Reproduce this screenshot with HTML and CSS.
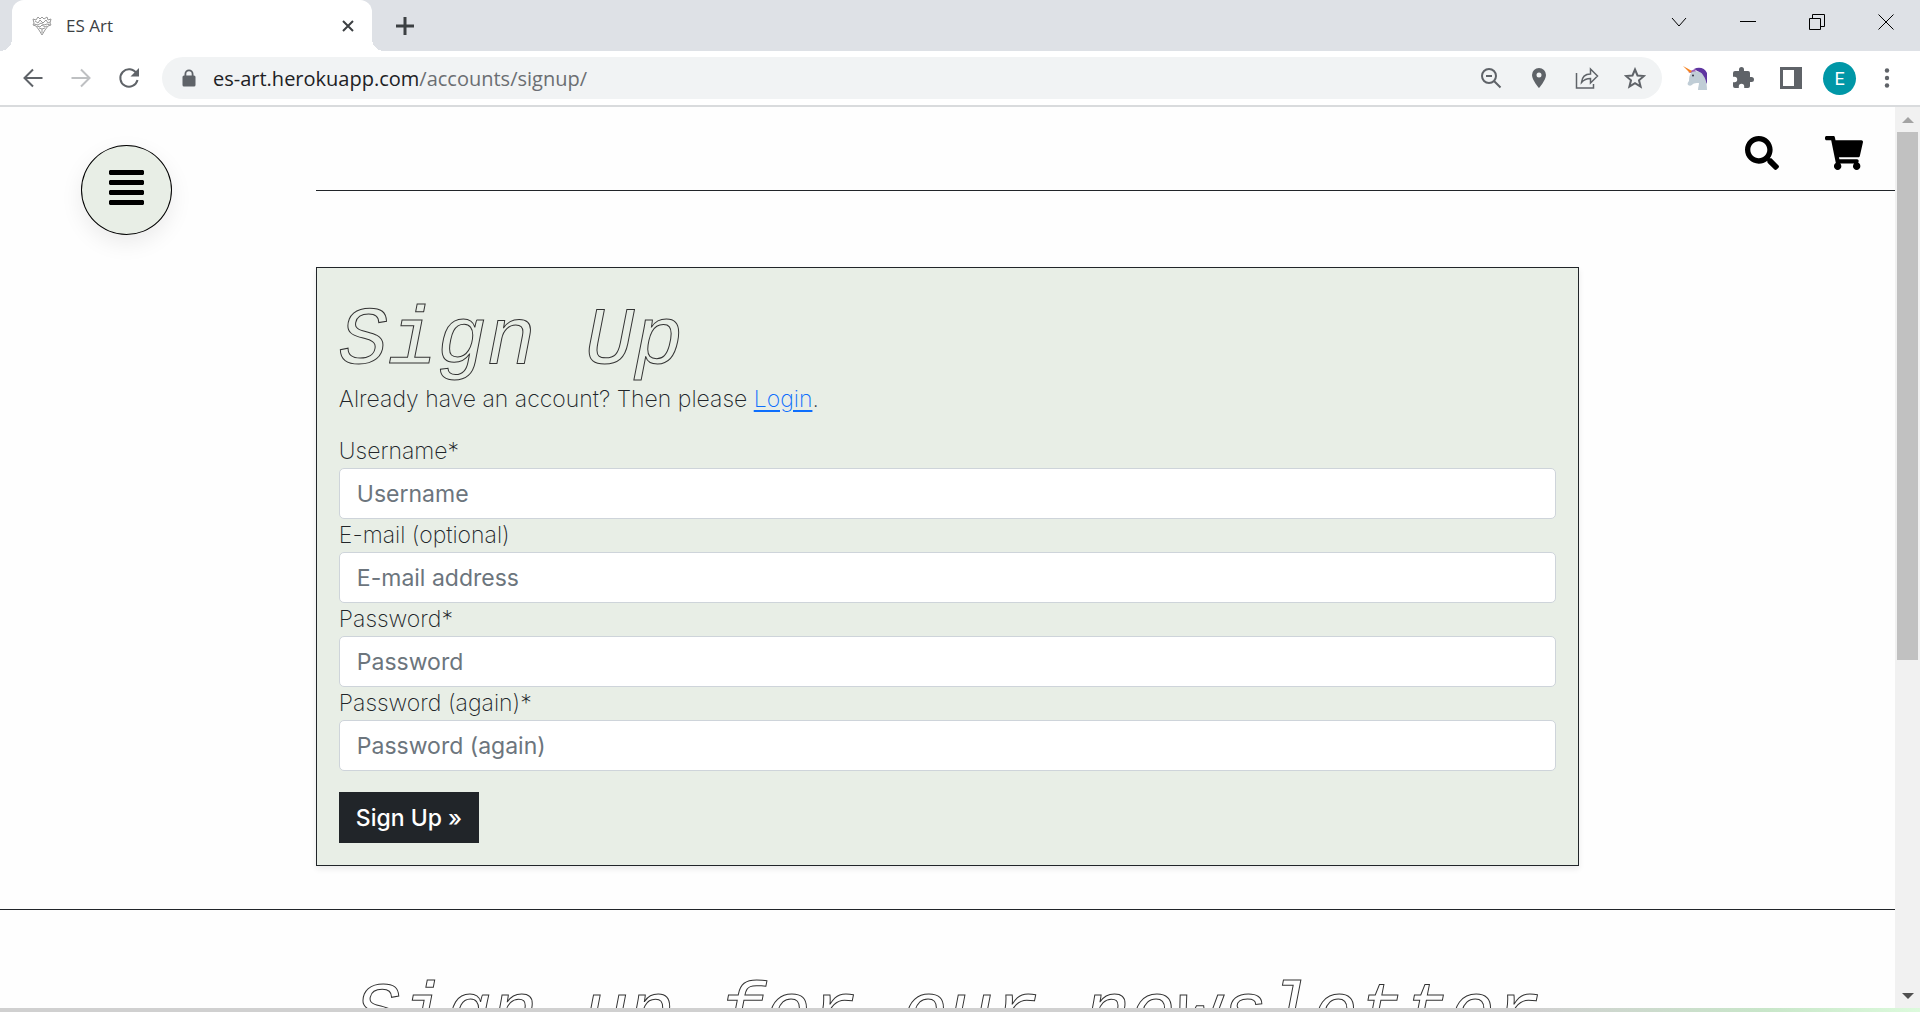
FILE: index.html
```html
<!DOCTYPE html>
<html lang="en">
<head>
<meta charset="utf-8">
<title>ES Art</title>
<link rel="stylesheet" href="styles.css">
</head>
<body>
<div class="browser">
  <div class="titlebar">
    <div class="tab">
      <svg class="favicon" width="20" height="20" viewBox="0 0 20 20" aria-hidden="true"><path d="M1 3l3 1 2-3 2 2 2-2 2 2 3-2 1 3 3-1-1 4 1 2-3 1-3 4-3 5-3-5-3-4-3-1 1-2zM3 5l3 2 2-3 3 3 3-3 2 3 2-1M2 8l4 1 3-2 3 2 3-1 3 1M5 10l3 1 2-2 3 2 2-1M7 12l3 1 3-1M10 13v4"/></svg>
      <span class="tab-title">ES Art</span>
      <button class="tab-close" aria-label="Close tab"><svg width="14" height="14" viewBox="0 0 14 14"><path d="M2 2l10 10M12 2L2 12"/></svg></button>
    </div>
    <button class="new-tab" aria-label="New tab"><svg width="18" height="18" viewBox="0 0 18 18"><path d="M9 0v18M0 9h18"/></svg></button>
    <div class="window-controls">
      <button aria-label="Search tabs"><svg width="16" height="16" viewBox="0 0 16 16"><path d="M1 4l7 8 7-8"/></svg></button>
      <button aria-label="Minimize"><svg width="16" height="16" viewBox="0 0 16 16"><path d="M0 7.500h16"/></svg></button>
      <button aria-label="Restore"><svg width="16" height="16" viewBox="0 0 16 16"><path d="M.5 4.500h11v11H.5zM3.500 4V.5h12v12H12"/></svg></button>
      <button aria-label="Close"><svg width="16" height="16" viewBox="0 0 16 16"><path d="M.5 .5l15 15M15.500 .5l-15 15"/></svg></button>
    </div>
  </div>

  <div class="toolbar">
    <div class="tool-group">
      <button aria-label="Back"><svg width="20" height="20" viewBox="0 0 20 20" class="line"><path d="M19.500 10H2M10 1.500L1.500 10l8.500 8.500"/></svg></button>
      <button aria-label="Forward" disabled><svg width="20" height="20" viewBox="0 0 20 20" class="line"><path d="M.5 10H18M10 1.500l8.500 8.500-8.500 8.500"/></svg></button>
      <button aria-label="Reload"><svg width="22" height="22" viewBox="0 0 22 22" class="line"><path d="M18.500 6.500A8.700 8.700 0 1 0 19.500 13"/><path class="solid" d="M21 1v8.500h-8.500z"/></svg></button>
    </div>
    <div class="omnibox">
      <svg width="14" height="18" viewBox="0 0 14 18" aria-hidden="true"><path d="M2.500 6.500V5a4.500 4.500 0 0 1 9 0v1.500h.5A1.500 1.500 0 0 1 13.500 8v8a1.500 1.500 0 0 1-1.500 1.500H2A1.500 1.500 0 0 1 .5 16V8A1.500 1.500 0 0 1 2 6.500zM4.300 6.500h5.400V5a2.700 2.700 0 0 0-5.400 0z"/></svg>
      <span class="url">es-art.herokuapp.com<span class="url-path">/accounts/signup/</span></span>
      <div class="tool-group">
        <button aria-label="Zoom"><svg width="22" height="22" viewBox="0 0 22 22" class="line"><circle cx="9" cy="9" r="7"/><path d="M14 14l6.500 6.500M6 9h6"/></svg></button>
        <button aria-label="Location"><svg width="16" height="22" viewBox="0 0 16 22"><path d="M8 1a7 7 0 0 1 7 7c0 5-7 13-7 13S1 13 1 8a7 7 0 0 1 7-7zm0 4.500a2.500 2.500 0 1 0 0 5 2.500 2.500 0 0 0 0-5z" fill-rule="evenodd"/></svg></button>
        <button aria-label="Share"><svg width="24" height="22" viewBox="0 0 24 22" class="line thin"><path d="M1.500 6v15h17v-4M6.500 15.500c.5-5.500 4-8.500 9-8.500V2l7 7-7 7v-4.500c-4 0-6.500 1-9 4z"/></svg></button>
        <button aria-label="Bookmark"><svg width="22" height="22" viewBox="0 0 22 22" class="line"><path d="M11 2.500l2.500 6 6.500.5-5 4.300 1.600 6.400L11 16.200l-5.600 3.500L7 13.300 2 9l6.500-.5z"/></svg></button>
      </div>
    </div>
    <div class="tool-group">
      <button aria-label="Unicorn extension"><svg width="24" height="24" viewBox="0 0 24 24"><path fill="#5e35a0" d="M11 3c5-2.500 11-1 13 4v11c-3-3-5-9-8-12z"/><path fill="#9b5db5" d="M5 6l7-3 1 3-5 1z"/><path fill="#c0cdd6" d="M9 6c4-1.500 9-1 11 3 2 3 4 6 4 15h-9c0-3 1-5 1-7-3 0-5 0-6 1-2 2-3 2-5 1-1-1 0-3 1-4 0-3 0-6 3-9z"/><path fill="#f5821f" d="M0 0l9 5-2 2z"/><circle cx="10" cy="9.500" r="1" fill="#334"/></svg></button>
      <button aria-label="Extensions"><svg width="24" height="24" viewBox="0 0 24 24"><path d="M20.500 11H19V7a2 2 0 0 0-2-2h-4V3.500a2.500 2.500 0 0 0-5 0V5H4a2 2 0 0 0-2 2v3.800h1.500a2.700 2.700 0 0 1 0 5.400H2V20a2 2 0 0 0 2 2h3.800v-1.500a2.700 2.700 0 0 1 5.400 0V22H17a2 2 0 0 0 2-2v-4h1.500a2.500 2.500 0 0 0 0-5z"/></svg></button>
      <button aria-label="Side panel"><svg width="22" height="22" viewBox="0 0 22 22"><path d="M0 0h22v22H0zM3 3v16h11V3z" fill-rule="evenodd"/></svg></button>
      <button class="avatar" aria-label="Profile">E</button>
      <button aria-label="Menu"><svg width="6" height="20" viewBox="0 0 6 20"><circle cx="3" cy="2.500" r="2.200"/><circle cx="3" cy="10" r="2.200"/><circle cx="3" cy="17.500" r="2.200"/></svg></button>
    </div>
  </div>

  <div class="viewport">
    <div class="page">
      <header class="site-header">
        <div class="menu-cell">
          <button class="menu-button" aria-label="Menu"><svg width="35" height="36" viewBox="0 0 35 36"><path d="M1 0h33l1 1v3l-1 1H1L0 4V1zM1 10h33l1 1v3l-1 1H1l-1-1v-3zM1 20h33l1 1v3l-1 1H1l-1-1v-3zM1 30h33l1 1v3l-1 1H1l-1-1v-3z"/></svg></button>
        </div>
        <nav class="site-nav">
          <a href="#search" aria-label="Search"><svg width="34" height="34" viewBox="0 0 512 512"><path d="M505 442.700L405.300 343c-4.500-4.500-10.600-7-17-7H372c27.600-35.300 44-79.700 44-128C416 93.100 322.900 0 208 0S0 93.100 0 208s93.100 208 208 208c48.300 0 92.700-16.400 128-44v16.300c0 6.400 2.500 12.500 7 17l99.700 99.700c9.400 9.400 24.600 9.400 33.900 0l28.300-28.300c9.400-9.400 9.400-24.600.1-34zM208 336c-70.700 0-128-57.200-128-128 0-70.700 57.200-128 128-128 70.700 0 128 57.200 128 128 0 70.700-57.200 128-128 128z"/></svg></a>
          <a href="#cart" aria-label="Cart"><svg width="38" height="34" viewBox="0 0 576 512"><path d="M528.120 301.319l47.273-208C578.806 78.301 567.391 64 551.990 64H159.208l-9.166-44.810C147.758 8.021 137.930 0 126.529 0H24C10.745 0 0 10.745 0 24v16c0 13.255 10.745 24 24 24h69.883l70.248 343.435C147.325 417.100 136 435.222 136 456c0 30.928 25.072 56 56 56s56-25.072 56-56c0-15.674-6.447-29.835-16.824-40h209.647C430.447 426.165 424 440.326 424 456c0 30.928 25.072 56 56 56s56-25.072 56-56c0-22.172-12.888-41.332-31.579-50.405l5.517-24.276c3.413-15.018-8.002-29.319-23.403-29.319H218.117l-6.545-32h293.145c11.206 0 20.920-7.754 23.403-18.681z"/></svg></a>
        </nav>
      </header>

      <main class="card">
        <h1>Sign Up</h1>
        <p>Already have an account? Then please <a href="#login">Login</a>.</p>
        <form>
          <label for="username">Username*</label>
          <input id="username" type="text" placeholder="Username">
          <label for="email">E-mail (optional)</label>
          <input id="email" type="email" placeholder="E-mail address">
          <label for="password1">Password*</label>
          <input id="password1" type="password" placeholder="Password">
          <label for="password2">Password (again)*</label>
          <input id="password2" type="password" placeholder="Password (again)">
          <button class="submit" type="submit">Sign Up »</button>
        </form>
      </main>

      <footer class="site-footer">
        <h2>Sign up for our newsletter</h2>
      </footer>
    </div>
    <div class="scrollbar" aria-hidden="true">
      <span class="arrow up"></span>
      <span class="track"><span class="thumb"></span></span>
      <span class="arrow down"></span>
    </div>
  </div>
  <div class="desktop-edge"></div>
</div>
</body>
</html>
```
FILE: styles.css
```css
* { box-sizing: border-box; }

body {
  margin: 0;
  font-family: Inter, sans-serif;
  color: #212529;
}

button {
  border: 0;
  padding: 0;
  background: none;
  font: inherit;
  color: inherit;
}

svg { display: block; flex: none; }

.browser {
  display: flex;
  flex-direction: column;
  height: 100vh;
  overflow: hidden;
}

/* Title bar */
.titlebar {
  display: flex;
  height: 51px;
  flex: none;
  padding-left: 12px;
  background: #dee1e6;
  font-family: "Open Sans", sans-serif;
}

.tab {
  position: relative;
  display: flex;
  align-items: center;
  width: 360px;
  padding: 0 17px 0 20px;
  border-radius: 12px 12px 0 0;
  background: #fff;
}

.tab::before,
.tab::after {
  content: "";
  position: absolute;
  bottom: 0;
  width: 12px;
  height: 12px;
}

.tab::before { right: 100%; background: radial-gradient(circle at 0 0, transparent 12px, #fff 12px); }
.tab::after { left: 100%; background: radial-gradient(circle at 100% 0, transparent 12px, #fff 12px); }

.favicon { fill: none; stroke: #999; }
.tab-title { flex: 1; padding-left: 14px; font-size: 17px; color: #3c4043; }
.tab-close svg { stroke: #3c4043; stroke-width: 2; }
.new-tab { padding-left: 24px; }
.new-tab svg { stroke: #3c4043; stroke-width: 3; }

.window-controls { display: flex; height: 44px; margin-left: auto; }
.window-controls button { display: grid; place-items: center; width: 69px; }
.window-controls svg { fill: none; stroke: #000; }

/* Toolbar */
.toolbar {
  display: flex;
  align-items: center;
  height: 56px;
  flex: none;
  padding: 0 9px;
  border-bottom: 2px solid #d9dbdd;
  background: #fff;
  font-family: "Open Sans", sans-serif;
}

.tool-group { display: flex; align-items: center; fill: #5f6368; }
.tool-group button { display: grid; place-items: center; width: 48px; height: 42px; }
.tool-group button:disabled { opacity: 0.4; }
.line { fill: none; stroke: #5f6368; stroke-width: 2; }
.line.thin { stroke-width: 1.5; }
.solid { fill: #5f6368; stroke: none; }

.omnibox {
  display: flex;
  flex: 1;
  align-items: center;
  height: 42px;
  margin: 0 9px;
  padding: 0 3px 0 20px;
  border-radius: 21px;
  background: #f1f3f4;
  fill: #5f6368;
}

.url { flex: 1; padding-left: 17px; font-size: 20px; color: #202124; }
.url-path { color: #6b6e72; }

.tool-group .avatar {
  width: 33px;
  height: 33px;
  margin: 0 7px 0 8px;
  border-radius: 50%;
  background: #0097a7;
  color: #fff;
  font-family: Roboto, sans-serif;
  font-size: 18px;
}

/* Page */
.viewport { display: flex; flex: 1; min-height: 0; background: #fefefe; }
.page { flex: 1; min-width: 0; overflow: hidden; }

.site-header {
  display: grid;
  grid-template-columns: 1fr 5fr;
  grid-template-rows: 84px;
  align-items: start;
}

.menu-cell { padding: 38px 0 0 81px; }

.menu-button {
  display: grid;
  place-items: center;
  width: 91px;
  height: 90px;
  padding-bottom: 4px;
  border: 1px solid #000;
  border-radius: 50%;
  background: #e8eee6;
  box-shadow: 0 8px 22px rgba(0, 0, 0, 0.08);
}

.site-nav {
  display: flex;
  justify-content: flex-end;
  gap: 46px;
  height: 84px;
  padding: 29px 32px 0 0;
  border-bottom: 1px solid #212529;
}

.card {
  width: 66.667%;
  margin: 76px auto 43px;
  padding: 30px 22px 22px;
  border: 1px solid #212529;
  background: #e8eee6;
  box-shadow: 0 3px 6px rgba(0, 0, 0, 0.08);
  font-size: 23px;
  font-weight: 200;
}

/* Outlined display headings */
h1, h2 {
  margin: 0;
  font-family: "Liberation Mono", monospace;
  font-style: italic;
  font-weight: 400;
  color: transparent;
  -webkit-text-stroke: 1px #333;
}

h1 { font-size: 82px; line-height: 88px; }
h2 { font-size: 76px; line-height: 80px; text-align: center; white-space: nowrap; }

.card p { margin: 0 0 23px; line-height: 26px; }
.card a { color: #0d6efd; text-underline-offset: 3px; }

.card label { display: block; line-height: 33px; }

.card input {
  display: block;
  width: 100%;
  height: 51px;
  padding: 0 17px;
  border: 1px solid #ced4da;
  border-radius: 5px;
  background: #fff;
  font-family: inherit;
  font-size: 23px;
  font-weight: 400;
}

.card input::placeholder { color: #6c757d; opacity: 1; }

.submit {
  display: block;
  height: 51px;
  margin-top: 21px;
  padding: 0 17px;
  background: #212529;
  color: #fff;
  font-weight: 500;
}

.site-footer { padding-top: 65px; border-top: 1px solid #212529; }

/* Scrollbar */
.scrollbar { display: flex; flex-direction: column; width: 25px; background: #f1f1f1; }
.arrow { display: grid; place-items: center; height: 25px; }
.arrow::before { content: ""; border: 6px solid transparent; }
.up::before { border-top: 0; border-bottom-color: #a3a3a3; }
.down::before { border-bottom: 0; border-top-color: #505050; }
.track { flex: 1; padding: 0 2px; }
.thumb { display: block; height: 62%; background: #c1c1c1; }

.desktop-edge {
  height: 4px;
  flex: none;
  background: linear-gradient(90deg, #d0d0d0 80%, #c8e6c9 92%, #dcfadc);
}
```
